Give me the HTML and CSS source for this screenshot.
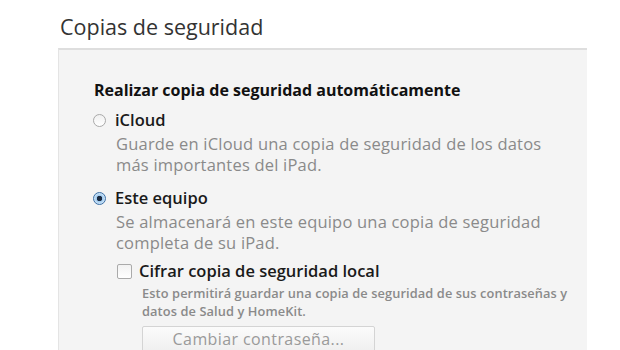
FILE: index.html
```html
<!DOCTYPE html>
<html lang="es">
<head>
<meta charset="utf-8">
<title>Copias de seguridad</title>
<link rel="stylesheet" href="styles.css">
</head>
<body>
<h1 class="title">Copias de seguridad</h1>
<section class="panel">
  <h2 class="heading">Realizar copia de seguridad automáticamente</h2>
  <div class="option">
    <span class="radio"></span>
    <span class="label">iCloud</span>
  </div>
  <p class="desc">Guarde en iCloud una copia de seguridad de los datos<br>más importantes del iPad.</p>
  <div class="option option-second">
    <span class="radio radio-on"></span>
    <span class="label">Este equipo</span>
  </div>
  <p class="desc">Se almacenará en este equipo una copia de seguridad<br>completa de su iPad.</p>
  <div class="sub">
    <div class="check-row">
      <span class="checkbox"></span>
      <span class="label">Cifrar copia de seguridad local</span>
    </div>
    <p class="small">Esto permitirá guardar una copia de seguridad de sus contraseñas y<br>datos de Salud y HomeKit.</p>
    <button class="btn" type="button">Cambiar contraseña...</button>
  </div>
</section>
</body>
</html>
```
FILE: styles.css
```css
html, body {
  margin: 0;
  padding: 0;
  background: #ffffff;
  font-family: "Open Sans", "Noto Sans", "DejaVu Sans", sans-serif;
  overflow: hidden;
}
.title {
  margin: 0;
  padding: 13px 0 0 60px;
  height: 48px;
  box-sizing: border-box;
  font-weight: 400;
  font-size: 21.5px;
  line-height: 28px;
  color: #333333;
}
.panel {
  margin-left: 58px;
  width: 529px;
  height: 302px;
  box-sizing: border-box;
  background: #f4f4f4;
  border-top: 2px solid #dedede;
  border-left: 1px solid #e4e4e4;
  padding: 30px 0 0 35px;
  overflow: hidden;
}
.heading {
  margin: 0;
  font-size: 16px;
  font-weight: 700;
  line-height: 20px;
  color: #111111;
}
.option {
  display: flex;
  align-items: center;
  gap: 9px;
  margin-top: 9px;
  height: 22px;
  margin-left: -1px;
}
.option-second {
  margin-top: 12px;
}
.radio {
  width: 11px;
  height: 11px;
  border-radius: 50%;
  border: 1px solid #a9a9a9;
  background: linear-gradient(#f0f0f0, #ffffff);
  flex: none;
}
.radio-on {
  border-color: #3a6ea5;
  background: radial-gradient(circle, #1b2a40 0 2.5px, #9fc9ee 3px, #d8ebfa 6px);
}
.label {
  font-size: 16.5px;
  font-weight: 600;
  color: #1a1a1a;
  line-height: 22px;
}
.desc {
  margin: 2px 0 0 22px;
  font-size: 16.5px;
  line-height: 21px;
  color: #8a8a8a;
  letter-spacing: 0.2px;
}
.sub {
  margin: 7px 0 0 23px;
}
.check-row {
  display: flex;
  align-items: center;
  gap: 7px;
  height: 22px;
}
.checkbox {
  width: 13px;
  height: 13px;
  border: 1px solid #aaaaaa;
  border-radius: 2px;
  background: linear-gradient(#f2f2f2, #ffffff);
  flex: none;
}
.small {
  margin: 3px 0 0 25px;
  font-size: 12.8px;
  line-height: 17.5px;
  color: #8a8a8a;
  letter-spacing: 0.1px;
  font-weight: 600;
}
.btn {
  display: block;
  margin: 6px 0 0 25px;
  width: 233px;
  height: 26px;
  border: 1px solid #d4d4d4;
  border-radius: 2px;
  background: linear-gradient(#fbfbfb, #efefef);
  font-family: inherit;
  font-size: 16px;
  line-height: 18px;
  color: #9a9a9a;
  padding: 0;
  letter-spacing: 0.4px;
}
```
